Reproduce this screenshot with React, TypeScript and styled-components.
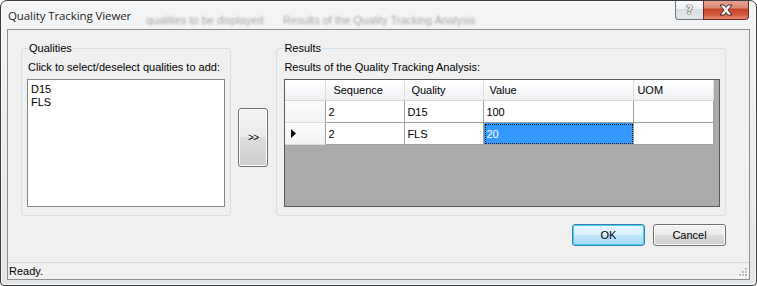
import React from "react";
import styled, { createGlobalStyle } from "styled-components";

const Global = createGlobalStyle`
  html, body { margin: 0; padding: 0; background: #ffffff; }
  body { width: 757px; height: 286px; overflow: hidden; }
  * { box-sizing: border-box; }
`;

const UI_FONT = `"Liberation Sans", Arial, sans-serif`;

const Window = styled.div`
  width: 757px;
  height: 286px;
  display: flex;
  flex-direction: column;
  padding: 0 6px 5px 6px;
  border: 1px solid #3b3b3b;
  border-radius: 7px 7px 4px 4px;
  background: linear-gradient(180deg, #f4f5f6 0%, #eceef0 40%, #e3e6e9 100%);
  box-shadow: inset 0 0 0 1px rgba(255,255,255,0.75);
  font-family: ${UI_FONT};
  font-size: 11px;
  color: #000;
  overflow: hidden;
`;

const TitleBar = styled.div`
  height: 28px;
  flex: none;
  display: flex;
  align-items: flex-start;
`;

const Title = styled.div`
  font-family: "Open Sans", "Noto Sans", sans-serif;
  font-size: 11.5px;
  color: #1a1a1a;
  margin-top: 7px;
  padding-left: 1px;
  letter-spacing: -0.1px;
  text-shadow: 0 0 6px #ffffff, 0 0 3px #ffffff;
  white-space: nowrap;
  width: 139px;
  flex: none;
`;

const GhostText = styled.div<{ $w: number }>`
  margin-top: 13px;
  width: ${(p) => p.$w}px;
  flex: none;
  font-size: 11px;
  color: #a4a4a4;
  filter: blur(1.3px);
  white-space: nowrap;
`;

const CaptionButtons = styled.div`
  margin-left: auto;
  margin-right: 1px;
  margin-top: -1px;
  display: flex;
  height: 20px;
`;

const HelpButton = styled.div`
  width: 28px;
  height: 20px;
  border: 1px solid #6e7680;
  border-right: none;
  border-top: none;
  border-radius: 0 0 0 4px;
  background: linear-gradient(180deg, #fbfbfb 0%, #eef0f2 45%, #d9dde2 50%, #e4e7ea 100%);
  display: flex;
  align-items: center;
  justify-content: center;
  font-family: "DejaVu Sans", sans-serif;
  font-size: 12px;
  font-weight: bold;
  color: #f8f8f8;
  text-shadow: 0 0 1px #333, 0 0 1px #333, 0 0 1px #333;
`;

const CloseButton = styled.div`
  width: 46px;
  height: 20px;
  border: 1px solid #6b2a20;
  border-top: none;
  border-radius: 0 0 4px 0;
  background: linear-gradient(180deg, #e8a493 0%, #d98a74 40%, #c7432a 50%, #d2553a 75%, #e08a6f 100%);
  display: flex;
  align-items: center;
  justify-content: center;
`;

const Client = styled.div`
  flex: 1;
  display: flex;
  flex-direction: column;
  border: 1px solid #8d9196;
  background: #f0f0f0;
`;

const Body = styled.div`
  flex: 1;
  display: flex;
  flex-direction: column;
  padding: 12px 23px 0 13px;
`;

const MainRow = styled.div`
  display: flex;
  align-items: flex-start;
`;

const Group = styled.fieldset<{ $w: number }>`
  width: ${(p) => p.$w}px;
  height: 174px;
  margin: 0;
  padding: 0 5px 8px 5px;
  border: 1px solid #d5dfe5;
  border-radius: 3px;
  display: flex;
  flex-direction: column;
  min-width: 0;
`;

const Legend = styled.legend`
  padding: 0 1px;
  margin-left: 1px;
  line-height: 13px;
  font-size: 11px;
`;

const Caption = styled.div<{ $indent?: number }>`
  line-height: 13px;
  margin-top: 6px;
  margin-bottom: 5px;
  padding-left: ${(p) => p.$indent ?? 1}px;
  white-space: nowrap;
`;

const ListBox = styled.div`
  flex: 1;
  background: #ffffff;
  border: 1px solid #828790;
  padding: 3px 0 0 3px;
`;

const ListItem = styled.div`
  line-height: 13px;
`;

const MoveButton = styled.div`
  width: 30px;
  height: 59px;
  margin: 66px 8px 0 7px;
  flex: none;
  border: 1px solid #707070;
  border-radius: 3px;
  background: linear-gradient(180deg, #f2f2f2 0%, #ebebeb 49%, #dddddd 50%, #cfcfcf 100%);
  box-shadow: inset 0 0 0 1px #fcfcfc;
  display: flex;
  align-items: center;
  justify-content: center;
  font-size: 10px;
  letter-spacing: -0.5px;
`;

const ResultsInner = styled.div`
  flex: 1;
  display: flex;
  flex-direction: column;
  padding: 0 0 0 2px;
`;

const DataGrid = styled.div`
  flex: 1;
  border: 1px solid #555a5f;
  background: #ababab;
  display: grid;
  grid-template-columns: 41px 79px 79px 150px 80px;
  grid-template-rows: 21px 22px 22px;
  align-content: start;
  justify-content: start;
`;

const HeaderCell = styled.div<{ $pad?: number }>`
  background: linear-gradient(180deg, #ffffff 0%, #f7f8fa 55%, #eef0f3 100%);
  border-right: 1px solid #dcdde0;
  border-bottom: 1px solid #d5d5d5;
  display: flex;
  align-items: center;
  padding-left: ${(p) => p.$pad ?? 6}px;
  white-space: nowrap;
`;

const RowHeader = styled.div`
  background: linear-gradient(180deg, #fbfbfb 0%, #f3f3f4 100%);
  border-right: 1px solid #a0a0a0;
  border-bottom: 1px solid #dcdcdc;
  display: flex;
  align-items: center;
  padding-left: 6px;
`;

const Cell = styled.div<{ $selected?: boolean }>`
  background: ${(p) => (p.$selected ? "#3399ff" : "#ffffff")};
  color: ${(p) => (p.$selected ? "#ffffff" : "#000000")};
  border-right: 1px solid #a0a0a0;
  border-bottom: 1px solid #a0a0a0;
  outline: ${(p) => (p.$selected ? "1px dotted #1a1a1a" : "none")};
  outline-offset: -2px;
  display: flex;
  align-items: center;
  padding-left: 2px;
  white-space: nowrap;
`;

const ButtonRow = styled.div`
  display: flex;
  justify-content: flex-end;
  gap: 8px;
  margin-top: 8px;
`;

const PushButton = styled.div<{ $default?: boolean }>`
  width: 73px;
  height: 22px;
  border: 1px solid ${(p) => (p.$default ? "#3c7fb1" : "#707070")};
  border-radius: 3px;
  background: ${(p) =>
    p.$default
      ? "linear-gradient(180deg, #eaf6fd 0%, #d9f0fc 49%, #bee6fd 50%, #a7d9f5 100%)"
      : "linear-gradient(180deg, #f2f2f2 0%, #ebebeb 49%, #dddddd 50%, #cfcfcf 100%)"};
  box-shadow: inset 0 0 0 1px ${(p) => (p.$default ? "#48d0f7" : "#fcfcfc")};
  display: flex;
  align-items: center;
  justify-content: center;
`;

const StatusBar = styled.div`
  height: 17px;
  flex: none;
  border-top: 1px solid #d7d7d7;
  display: flex;
  align-items: center;
  padding: 0 1px 0 1px;
  background: #f0f0f0;
`;

const StatusText = styled.div`
  flex: 1;
  line-height: 13px;
`;

const Grip = () => (
  <svg width="12" height="12" viewBox="0 0 12 12">
    {[
      [9, 3],
      [6, 6],
      [9, 6],
      [3, 9],
      [6, 9],
      [9, 9],
    ].map(([x, y]) => (
      <g key={`${x}-${y}`}>
        <rect x={x + 1} y={y + 1} width="2" height="2" fill="#ffffff" />
        <rect x={x} y={y} width="2" height="2" fill="#b8b8b8" />
      </g>
    ))}
  </svg>
);

const CloseGlyph = () => (
  <svg width="16" height="12" viewBox="0 0 16 12">
    <path
      d="M2 1 L6 1 L8 3.5 L10 1 L14 1 L10 6 L14 11 L10 11 L8 8.5 L6 11 L2 11 L6 6 Z"
      fill="#ffffff"
      stroke="#3b2a26"
      strokeWidth="1"
      strokeLinejoin="round"
    />
  </svg>
);

const RowArrow = () => (
  <svg width="5" height="9" viewBox="0 0 5 9">
    <path d="M0 0 L5 4.5 L0 9 Z" fill="#000" />
  </svg>
);

type Row = { seq: string; quality: string; value: string; uom: string; current?: boolean };

const rows: Row[] = [
  { seq: "2", quality: "D15", value: "100", uom: "" },
  { seq: "2", quality: "FLS", value: "20", uom: "", current: true },
];

export default function App() {
  return (
    <>
      <Global />
      <Window>
        <TitleBar>
          <Title>Quality Tracking Viewer</Title>
          <GhostText $w={137}>qualities to be displayed</GhostText>
          <GhostText $w={200}>Results of the Quality Tracking Analysis</GhostText>
          <CaptionButtons>
            <HelpButton>?</HelpButton>
            <CloseButton>
              <CloseGlyph />
            </CloseButton>
          </CaptionButtons>
        </TitleBar>
        <Client>
          <Body>
            <MainRow>
              <Group $w={211}>
                <Legend>Qualities</Legend>
                <Caption>Click to select/deselect qualities to add:</Caption>
                <ListBox>
                  <ListItem>D15</ListItem>
                  <ListItem>FLS</ListItem>
                </ListBox>
              </Group>
              <MoveButton>&gt;&gt;</MoveButton>
              <Group $w={451}>
                <Legend>Results</Legend>
                <ResultsInner>
                  <Caption $indent={0}>Results of the Quality Tracking Analysis:</Caption>
                  <DataGrid>
                    <HeaderCell />
                    <HeaderCell $pad={7}>Sequence</HeaderCell>
                    <HeaderCell $pad={6}>Quality</HeaderCell>
                    <HeaderCell $pad={5}>Value</HeaderCell>
                    <HeaderCell $pad={3}>UOM</HeaderCell>
                    {rows.map((r, i) => (
                      <React.Fragment key={i}>
                        <RowHeader>{r.current ? <RowArrow /> : null}</RowHeader>
                        <Cell>{r.seq}</Cell>
                        <Cell>{r.quality}</Cell>
                        <Cell $selected={r.current}>{r.value}</Cell>
                        <Cell>{r.uom}</Cell>
                      </React.Fragment>
                    ))}
                  </DataGrid>
                </ResultsInner>
              </Group>
            </MainRow>
            <ButtonRow>
              <PushButton $default>OK</PushButton>
              <PushButton>Cancel</PushButton>
            </ButtonRow>
          </Body>
          <StatusBar>
            <StatusText>Ready.</StatusText>
            <Grip />
          </StatusBar>
        </Client>
      </Window>
    </>
  );
}
